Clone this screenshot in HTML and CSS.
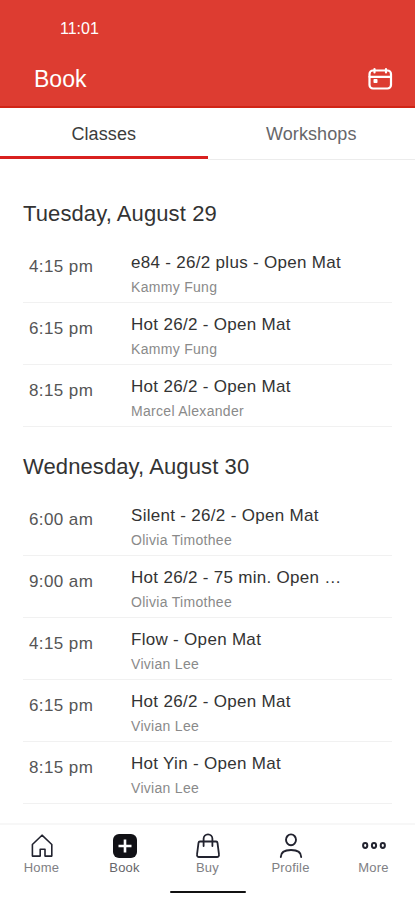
FILE: index.html
```html
<!DOCTYPE html>
<html lang="en">
<head>
    <meta charset="UTF-8">
    <meta name="viewport" content="width=device-width, initial-scale=1.0">
    <title>Book</title>
    <link rel="stylesheet" href="styles.css">
</head>
<body>
    <div class="app">
        <header class="header">
            <div class="status-bar">11:01</div>
            <div class="title-bar">
                <h1>Book</h1>
                <svg class="calendar-icon" width="26" height="24" viewBox="0 0 26 24" fill="none" stroke="#fff" stroke-width="2.2" stroke-linecap="round">
                    <rect x="2.5" y="3.5" width="21.5" height="18" rx="3.5"/>
                    <path d="M2.5 9.8h21.500M7.500 2v3.500M19 2v3.500"/>
                    <rect x="6.500" y="12" width="4" height="4" rx="0.800" fill="#fff" stroke="none"/>
                </svg>
            </div>
        </header>

        <nav class="tabs">
            <a class="tab active">Classes</a>
            <a class="tab">Workshops</a>
        </nav>

        <main class="schedule">
            <section class="day">
                <h2>Tuesday, August 29</h2>
                <div class="row">
                    <div class="time">4:15 pm</div>
                    <div class="info">
                        <div class="name">e84 - 26/2 plus - Open Mat</div>
                        <div class="teacher">Kammy Fung</div>
                    </div>
                </div>
                <div class="row">
                    <div class="time">6:15 pm</div>
                    <div class="info">
                        <div class="name">Hot 26/2 - Open Mat</div>
                        <div class="teacher">Kammy Fung</div>
                    </div>
                </div>
                <div class="row">
                    <div class="time">8:15 pm</div>
                    <div class="info">
                        <div class="name">Hot 26/2 - Open Mat</div>
                        <div class="teacher">Marcel Alexander</div>
                    </div>
                </div>
            </section>

            <section class="day">
                <h2>Wednesday, August 30</h2>
                <div class="row">
                    <div class="time">6:00 am</div>
                    <div class="info">
                        <div class="name">Silent - 26/2 - Open Mat</div>
                        <div class="teacher">Olivia Timothee</div>
                    </div>
                </div>
                <div class="row">
                    <div class="time">9:00 am</div>
                    <div class="info">
                        <div class="name">Hot 26/2 - 75 min. Open …</div>
                        <div class="teacher">Olivia Timothee</div>
                    </div>
                </div>
                <div class="row">
                    <div class="time">4:15 pm</div>
                    <div class="info">
                        <div class="name">Flow - Open Mat</div>
                        <div class="teacher">Vivian Lee</div>
                    </div>
                </div>
                <div class="row">
                    <div class="time">6:15 pm</div>
                    <div class="info">
                        <div class="name">Hot 26/2 - Open Mat</div>
                        <div class="teacher">Vivian Lee</div>
                    </div>
                </div>
                <div class="row">
                    <div class="time">8:15 pm</div>
                    <div class="info">
                        <div class="name">Hot Yin - Open Mat</div>
                        <div class="teacher">Vivian Lee</div>
                    </div>
                </div>
            </section>
        </main>

        <footer class="bottom">
            <nav class="bottom-nav">
                <a class="nav-item">
                    <svg width="26" height="26" viewBox="0 0 26 26" fill="none" stroke="#22232f" stroke-width="1.6" stroke-linejoin="round">
                        <path d="M3.400 11.500L13 2.200l9.800 9.300v11.600h-6.800v-6.800h-4.800v6.800H3.400z"/>
                    </svg>
                    <span>Home</span>
                </a>
                <a class="nav-item active">
                    <svg width="26" height="26" viewBox="0 0 26 26">
                        <rect x="1" y="1" width="24" height="24" rx="6" fill="#111116"/>
                        <path d="M13 6.500v13M6.500 13h13" stroke="#fff" stroke-width="2.600"/>
                    </svg>
                    <span>Book</span>
                </a>
                <a class="nav-item">
                    <svg width="26" height="26" viewBox="0 0 26 26" fill="none" stroke="#22232f" stroke-width="1.8" stroke-linecap="round" stroke-linejoin="round">
                        <path d="M5 8.500h16a1.500 1.500 0 0 1 1.500 1.300l1.500 11.900a2 2 0 0 1-2 2.300H4a2 2 0 0 1-2-2.300L3.500 9.800A1.500 1.500 0 0 1 5 8.500z"/>
                        <path d="M8.600 13V5.800a4.400 4.400 0 0 1 8.800 0V13"/>
                    </svg>
                    <span>Buy</span>
                </a>
                <a class="nav-item">
                    <svg width="26" height="26" viewBox="0 0 26 26" fill="none" stroke="#22232f" stroke-width="1.9" stroke-linecap="round">
                        <ellipse cx="13" cy="6.800" rx="5" ry="5.400"/>
                        <path d="M2.800 24c0-4.500 3.500-7 10.200-7s10.200 2.500 10.200 7"/>
                    </svg>
                    <span>Profile</span>
                </a>
                <a class="nav-item">
                    <svg width="26" height="26" viewBox="0 0 26 26" fill="none" stroke="#22232f" stroke-width="2">
                        <ellipse cx="4.200" cy="12.500" rx="2.100" ry="2.400"/>
                        <ellipse cx="13" cy="12.500" rx="2.100" ry="2.400"/>
                        <ellipse cx="21.800" cy="12.500" rx="2.100" ry="2.400"/>
                    </svg>
                    <span>More</span>
                </a>
            </nav>
            <div class="home-bar"></div>
        </footer>
    </div>
</body>
</html>
```

FILE: styles.css
```css
* {
    box-sizing: border-box;
}

body {
    margin: 0;
    font-family: "Liberation Sans", Arial, sans-serif;
    background-color: #fff;
    color: #333;
}

.app {
    display: flex;
    flex-direction: column;
    height: 900px;
    overflow: hidden;
}

.header {
    height: 108px;
    background-color: #dd3c31;
    border-bottom: 2px solid #d02517;
    color: #fff;
}

.status-bar {
    height: 56px;
    padding-left: 60px;
    font-size: 16px;
    line-height: 58px;
}

.title-bar {
    display: flex;
    justify-content: space-between;
    align-items: center;
    height: 46px;
    padding: 0 22px 0 34px;
}

.title-bar h1 {
    margin: 0;
    font-size: 23px;
    font-weight: normal;
}

.tabs {
    display: flex;
    height: 52px;
}

.tab {
    flex: 1;
    border-bottom: 1px solid #ececec;
    font-size: 18px;
    line-height: 52px;
    letter-spacing: 0.1px;
    text-align: center;
    color: #66666a;
}

.tab.active {
    border-bottom: 3px solid #d9201f;
    height: 51px;
    color: #3c3c3c;
}

.schedule {
    flex: 1;
    padding: 28px 23px 0;
}

.day {
    margin-bottom: 14px;
}

.day h2 {
    margin: 0;
    height: 53px;
    font-size: 22px;
    font-weight: normal;
    line-height: 51px;
    letter-spacing: 0.1px;
}

.row {
    display: flex;
    height: 62px;
    border-bottom: 1px solid #f1f1f1;
}

.time {
    width: 108px;
    padding: 16px 0 0 6px;
    font-size: 17px;
    line-height: 20px;
    letter-spacing: 0.4px;
    color: #555;
}

.info {
    flex: 1;
}

.name {
    padding-top: 12px;
    font-size: 17px;
    line-height: 20px;
    letter-spacing: 0.3px;
    white-space: nowrap;
}

.teacher {
    padding-top: 5px;
    font-size: 14px;
    line-height: 18px;
    letter-spacing: 0.3px;
    color: #8a8a8a;
}

.bottom {
    height: 77px;
    border-top: 2px solid #f7f7f7;
}

.bottom-nav {
    display: flex;
    height: 66px;
    padding-top: 8px;
}

.nav-item {
    flex: 1;
    display: flex;
    flex-direction: column;
    align-items: center;
    font-size: 13px;
    line-height: 18px;
    letter-spacing: 0.2px;
    color: #808084;
}

.nav-item.active {
    color: #66666a;
}

.home-bar {
    width: 76px;
    height: 2px;
    margin: 0 auto;
    border-radius: 1px;
    background-color: #111;
}
```
